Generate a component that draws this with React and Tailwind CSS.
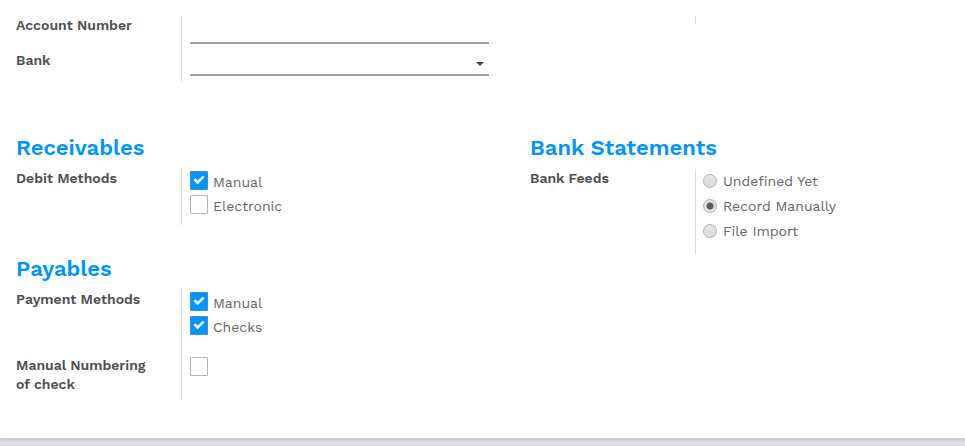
import { useState } from "react";

const labelClass = "text-[14px] leading-[19px] font-semibold text-[#505050]";

function Title({ children }) {
  return <h2 className="text-[22px] leading-7 font-semibold text-[#0094ff]">{children}</h2>;
}

function Check({ id, label, defaultChecked }) {
  const [checked, setChecked] = useState(Boolean(defaultChecked));
  return (
    <div className="flex h-6 items-start gap-[5px]">
      <span className="relative h-[19px] w-[18px] shrink-0">
        <input
          id={id}
          type="checkbox"
          checked={checked}
          onChange={(e) => setChecked(e.target.checked)}
          className="block h-[19px] w-[18px] appearance-none rounded-[1px] border border-[#adb5bd] bg-white checked:border-[#3f8fd2] checked:bg-[#0094ff]"
        />
        {checked && (
          <svg viewBox="0 0 18 19" className="pointer-events-none absolute inset-0 h-[19px] w-[18px]" aria-hidden="true">
            <path d="M4.4 8.2 7.6 11.5 13.6 5.6" fill="none" stroke="white" strokeWidth="2.6" />
          </svg>
        )}
      </span>
      {label && (
        <label htmlFor={id} className="pt-px text-[14px] leading-5 text-[#666666]">
          {label}
        </label>
      )}
    </div>
  );
}

function Radio({ id, label, defaultChecked }) {
  return (
    <div className="flex h-[25px] items-start gap-[6px] pt-px">
      <input
        id={id}
        type="radio"
        name="bank-feeds"
        defaultChecked={defaultChecked}
        className="mt-1 h-[14px] w-[14px] shrink-0 appearance-none rounded-full border border-[#b2b2b2] bg-linear-to-b from-[#e6e6e6] to-[#dadada] checked:bg-[radial-gradient(circle,#5c5c5c_3px,#e0e0e0_4px)]"
      />
      <label htmlFor={id} className="pt-px text-[14px] leading-5 text-[#666666]">
        {label}
      </label>
    </div>
  );
}

export default function App() {
  return (
    <div className="min-h-screen bg-[#dcdde2] font-['Work_Sans',Inter,sans-serif]">
      <main className="border-b border-[#cbccd1] bg-white pt-4 pb-10 pl-4 shadow-sm">
        <div className="grid grid-cols-[473fr_435fr] gap-x-[41px]">
          <div className="grid grid-cols-[165px_1fr]">
            <div className="flex flex-col gap-4">
              <label htmlFor="account" className={labelClass}>Account Number</label>
              <label htmlFor="bank" className={labelClass}>Bank</label>
            </div>
            <div className="flex flex-col gap-1 border-l border-[#dddddd] pb-[6px] pl-2">
              <input id="account" type="text" className="block h-7 w-full border-b-2 border-[#a3a3a3] text-[14px] outline-none" />
              <div className="relative">
                <select id="bank" className="block h-7 w-full appearance-none border-b-2 border-[#a3a3a3] bg-transparent text-[14px] outline-none">
                  <option />
                </select>
                <svg viewBox="0 0 8 4" className="pointer-events-none absolute top-[14px] right-[5px] h-1 w-2" aria-hidden="true">
                  <path d="M0 0H8L4 4Z" fill="#444444" />
                </svg>
              </div>
            </div>
          </div>
          <div className="grid grid-cols-[165px_1fr]">
            <div />
            <div className="h-2 border-l border-[#dddddd]" />
          </div>
        </div>

        <div className="mt-[52px] grid grid-cols-[473fr_435fr] gap-x-[41px]">
          <div className="flex flex-col gap-[30px]">
            <section className="flex flex-col gap-[7px]">
              <Title>Receivables</Title>
              <div className="grid grid-cols-[165px_1fr]">
                <div className={labelClass} id="debit-label">Debit Methods</div>
                <div role="group" aria-labelledby="debit-label" className="border-l border-[#dddddd] pt-[2px] pb-[6px] pl-2">
                  <Check id="debit-manual" label="Manual" defaultChecked />
                  <Check id="debit-electronic" label="Electronic" />
                </div>
              </div>
            </section>
            <section className="flex flex-col gap-[7px]">
              <Title>Payables</Title>
              <div className="grid grid-cols-[165px_1fr]">
                <div className="flex flex-col gap-[47px]">
                  <div className={labelClass} id="payment-label">Payment Methods</div>
                  <label htmlFor="numbering" className={labelClass}>
                    Manual Numbering
                    <br />
                    of check
                  </label>
                </div>
                <div className="flex flex-col gap-[17px] border-l border-[#dddddd] pt-[2px] pb-[17px] pl-2">
                  <div role="group" aria-labelledby="payment-label">
                    <Check id="payment-manual" label="Manual" defaultChecked />
                    <Check id="payment-checks" label="Checks" defaultChecked />
                  </div>
                  <Check id="numbering" />
                </div>
              </div>
            </section>
          </div>
          <section className="flex flex-col gap-[7px]">
            <Title>Bank Statements</Title>
            <div className="grid grid-cols-[165px_1fr]">
              <div className={labelClass} id="feeds-label">Bank Feeds</div>
              <div role="radiogroup" aria-labelledby="feeds-label" className="border-l border-[#dddddd] pb-[10px] pl-[7px]">
                <Radio id="feed-undefined" label="Undefined Yet" />
                <Radio id="feed-manual" label="Record Manually" defaultChecked />
                <Radio id="feed-import" label="File Import" />
              </div>
            </div>
          </section>
        </div>
      </main>
    </div>
  );
}
